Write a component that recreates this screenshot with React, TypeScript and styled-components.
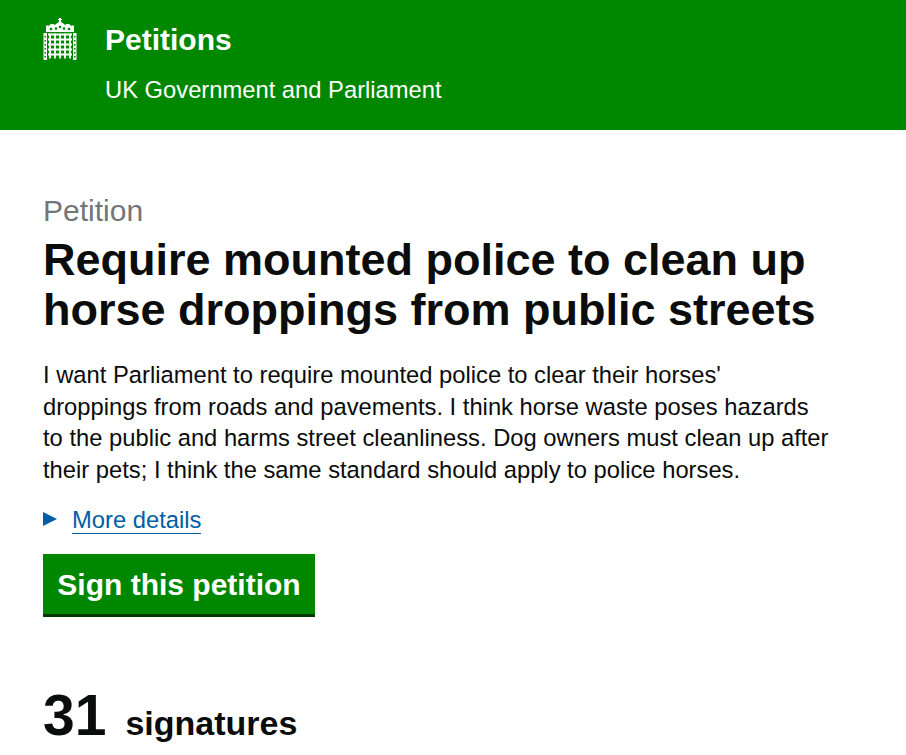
import React from "react";
import styled, { createGlobalStyle } from "styled-components";

const Global = createGlobalStyle`
  html, body { margin: 0; padding: 0; background: #fff; height: 755px; overflow: hidden; }
  body { font-family: "Liberation Sans", Arial, sans-serif; color: #0b0c0c; }
`;
const Header = styled.header`
  background: #008700; height: 130px; box-sizing: border-box; padding: 17px 43px 0;
  display: flex; gap: 28px; color: #fff;
`;
const Logo = styled.svg`width: 34px; height: 42px; margin-top: 1px; flex: none;`;
const Brand = styled.div`display: flex; flex-direction: column;`;
const Title = styled.a`font-size: 30px; font-weight: 700; line-height: 45px;`;
const Sub = styled.span`font-size: 23.750px; line-height: 26px; margin-top: 15px;`;
const Main = styled.main`padding: 62px 43px 0; max-width: 790px;`;
const Kicker = styled.div`font-size: 30px; line-height: 38px; color: #6f777b;`;
const Heading = styled.h1`margin: 5px 0 0; font-size: 45px; line-height: 50px; font-weight: 700;`;
const Lead = styled.p`margin: 24px 0 0; max-width: 787px; font-size: 23.750px; line-height: 31.600px;`;
const Details = styled.div`display: flex; align-items: center; margin-top: 19px; gap: 15px; height: 32px;`;
const Arrow = styled.span`
  width: 0; height: 0; border-left: 14px solid #005ea5; border-top: 7.500px solid transparent;
  border-bottom: 7.500px solid transparent; margin-bottom: 3px;
`;
const DetailLink = styled.a`font-size: 23.750px; color: #005ea5; border-bottom: 1px solid #005ea5; line-height: 26px;`;
const Sign = styled.button`
  display: block; margin-top: 18px; background: #008700; color: #fff; border: 0; border-bottom: 3px solid #003a00;
  font: 700 30px/1 "Liberation Sans", Arial, sans-serif; height: 63px; width: 272px; padding: 2px 0 0;
`;
const Count = styled.div`display: flex; align-items: baseline; gap: 19px; margin-top: 63px;`;
const Num = styled.span`font-size: 57px; font-weight: 700; line-height: 70px;`;
const Label = styled.span`font-size: 34px; font-weight: 700;`;

const Portcullis = () => (
  <Logo viewBox="0 0 34 42" fill="#fff" aria-hidden="true">
    <path d="M3 14V8a2 2 0 0 1 3 0 3 3 0 0 1 3-2 3 3 0 0 1 3 1c1-1 2-2 4-3V2h-1V1h1V0h2v1h1v1h-1v2c2 1 3 2 4 3a3 3 0 0 1 3-1 3 3 0 0 1 3 2 2 2 0 0 1 3 0v6z" />
    <g fill="#008700">
      <circle cx="8" cy="11" r="1.300" /><circle cx="13" cy="10.500" r="1.300" /><circle cx="17" cy="9" r="1.300" />
      <circle cx="21" cy="10.500" r="1.300" /><circle cx="26" cy="11" r="1.300" />
    </g>
    <rect x="0.500" y="15" width="3.500" height="27" />
    <rect x="30" y="15" width="3.500" height="27" />
    <g fill="#008700">
      {[18, 22, 26, 30, 34, 38].map((y) => (
        <React.Fragment key={y}>
          <rect x="1.500" y={y} width="1.500" height="1.500" />
          <rect x="31" y={y} width="1.500" height="1.500" />
        </React.Fragment>
      ))}
    </g>
    <g stroke="#fff" strokeWidth="1.800" fill="none">
      <path d="M5 16.500h24M5 21.500h24M5 26.500h24M5 31.500h24M5 36.500h24" />
      <path d="M7 15.500v25M12 15.500v25M17 15.500v25M22 15.500v25M27 15.500v25" />
    </g>
  </Logo>
);

export default function App() {
  return (
    <>
      <Global />
      <Header>
        <Portcullis />
        <Brand>
          <Title>Petitions</Title>
          <Sub>UK Government and Parliament</Sub>
        </Brand>
      </Header>
      <Main>
        <Kicker>Petition</Kicker>
        <Heading>Require mounted police to clean up horse droppings from public streets</Heading>
        <Lead>I want Parliament to require mounted police to clear their horses' droppings from roads and pavements. I think horse waste poses hazards to the public and harms street cleanliness. Dog owners must clean up after their pets; I think the same standard should apply to police horses.</Lead>
        <Details><Arrow /><DetailLink>More details</DetailLink></Details>
        <Sign>Sign this petition</Sign>
        <Count><Num>31</Num><Label>signatures</Label></Count>
      </Main>
    </>
  );
}
